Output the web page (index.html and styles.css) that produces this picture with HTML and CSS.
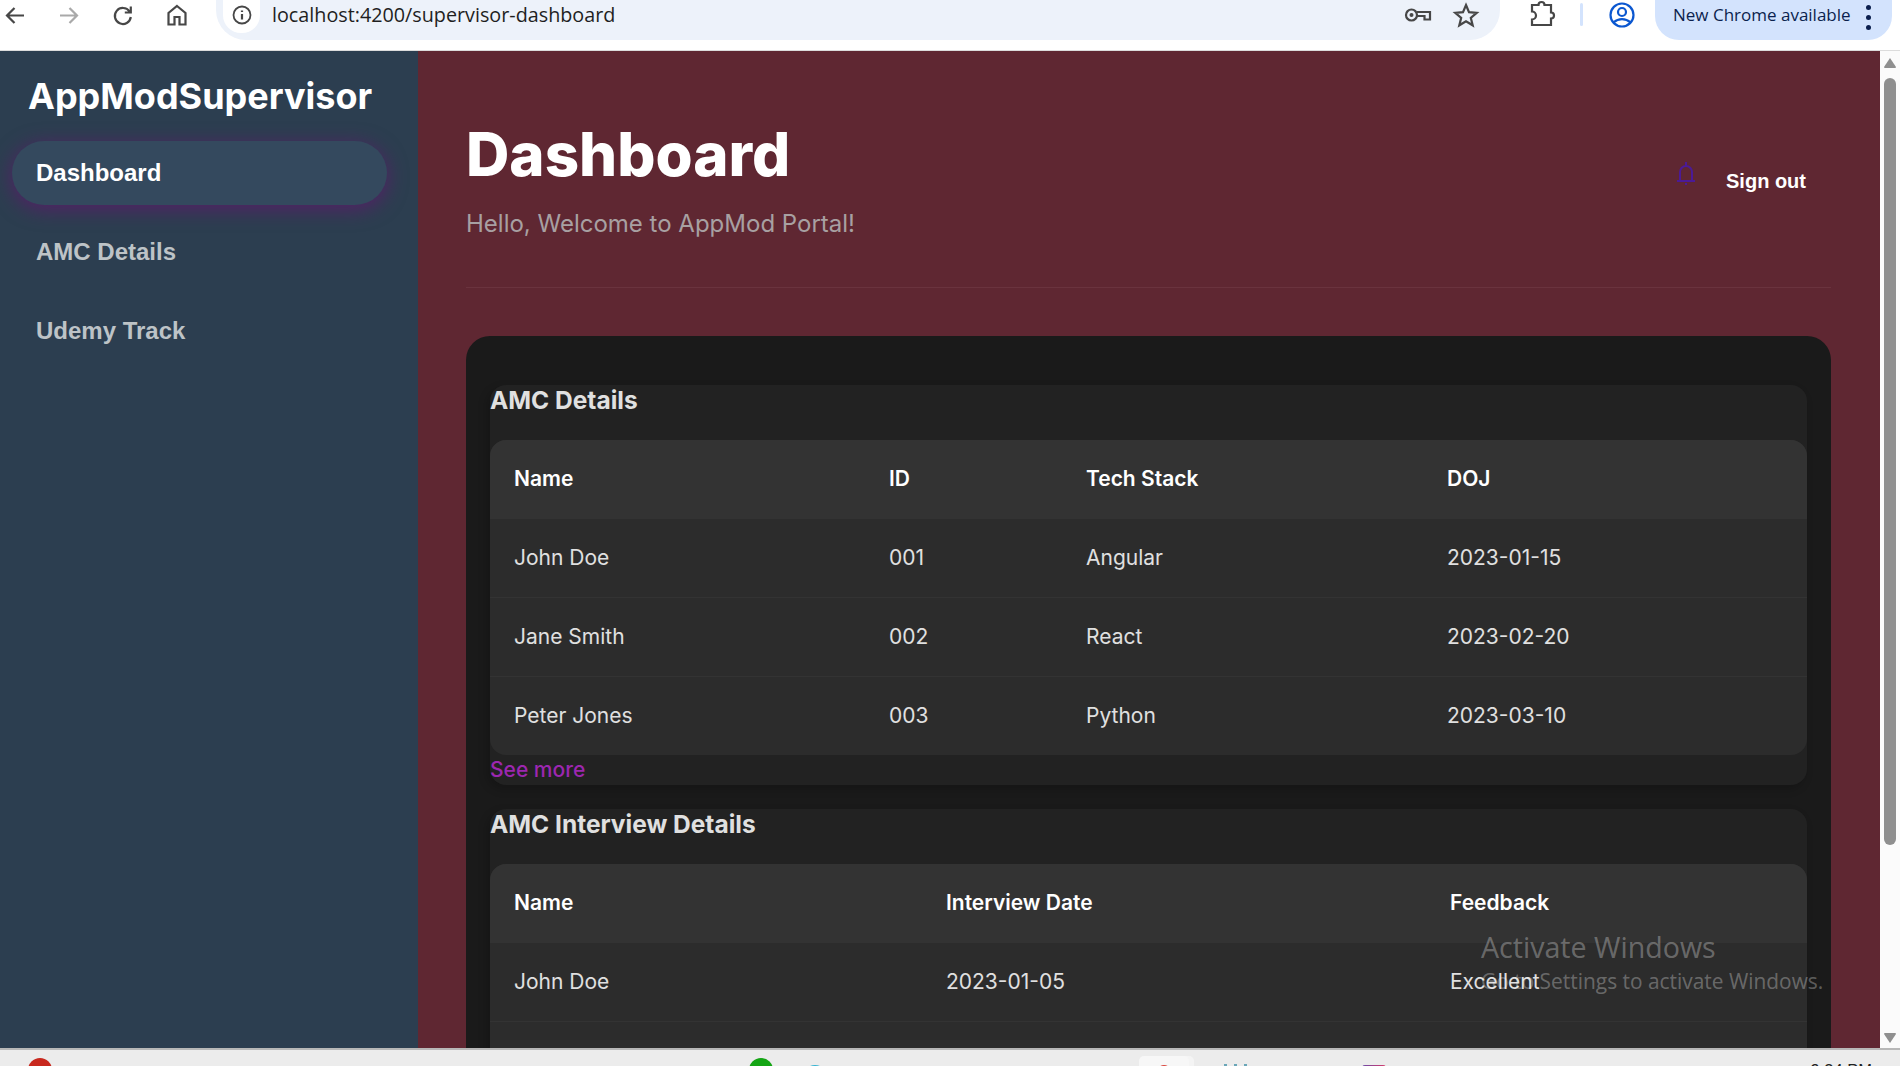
FILE: index.html
```html
<!DOCTYPE html>
<html lang="en">
<head>
    <meta charset="UTF-8">
    <meta name="viewport" content="width=device-width, initial-scale=1.0">
    <title>Supervisor Dashboard</title>
    <link rel="stylesheet" href="styles.css">
</head>
<body>

    <!-- browser toolbar -->
    <div class="toolbar">
        <div class="tool-group">
            <svg class="tool-icon" viewBox="0 0 30 30"><path d="M24 15.500H7M14.500 8l-7.500 7.500 7.500 7.500" class="ink"/></svg>
            <svg class="tool-icon" viewBox="0 0 30 30"><path d="M6 15.500h17M15.500 8l7.500 7.500-7.500 7.500" class="ink-off"/></svg>
            <svg class="tool-icon" viewBox="0 0 30 30"><path d="M21.500 11.500a8 8 0 1 0 1.300 5.500M22.800 6.500v6h-6" class="ink"/></svg>
            <svg class="tool-icon" viewBox="0 0 30 30"><path d="M15 6l8.500 7v11.500h-6v-7.500h-5v7.500h-6v-11.500z" class="ink"/></svg>
        </div>
        <div class="url-bar">
            <div class="info-chip">
                <svg class="tool-icon" viewBox="0 0 30 30"><circle cx="15" cy="15" r="8.500" class="ink-thin"/><path d="M15 14v5.500M15 10.500v1.500" class="ink"/></svg>
            </div>
            <span class="url-text">localhost:4200/supervisor-dashboard</span>
            <div class="url-actions">
                <svg class="tool-icon" viewBox="0 0 30 30"><circle cx="8.500" cy="15" r="5.500" class="ink"/><circle cx="8.500" cy="15" r="2" fill="#474747"/><path d="M14 12h13v7.500h-5.500v-3.500h-7.500" class="ink"/></svg>
                <svg class="tool-icon" viewBox="0 0 30 30"><path d="M15 5l3 7.200 7.700.6-5.900 5 1.900 7.500L15 21.200l-6.700 4.100 1.900-7.500-5.900-5 7.700-.6z" class="ink"/></svg>
            </div>
        </div>
        <svg class="tool-icon ext-icon" viewBox="0 0 30 30"><path d="M5 5h6.500a3 3 0 0 1 6 0H24v7.500a3 3 0 0 1 0 6V25H5v-5.500a4 4 0 0 0 0-8z" class="ink"/></svg>
        <div class="tool-sep"></div>
        <svg class="tool-icon profile-icon" viewBox="0 0 30 30"><circle cx="15" cy="15" r="11.500" class="ink-blue"/><circle cx="15" cy="12" r="4" class="ink-blue"/><path d="M6.500 22.500c5-4.500 12-4.500 17 0" class="ink-blue"/></svg>
        <div class="update-pill">
            <span>New Chrome available</span>
            <div class="dots"><i></i><i></i><i></i></div>
        </div>
    </div>

    <div class="window">
        <aside class="sidebar">
            <div class="brand">AppModSupervisor</div>
            <nav class="nav">
                <a class="nav-item active">Dashboard</a>
                <a class="nav-item">AMC Details</a>
                <a class="nav-item">Udemy Track</a>
            </nav>
        </aside>

        <main class="main">
            <header class="page-header">
                <div>
                    <h1 class="page-title">Dashboard</h1>
                    <p class="page-sub">Hello, Welcome to AppMod Portal!</p>
                </div>
                <div class="header-actions">
                    <svg class="bell" viewBox="0 0 20 24"><path d="M1 20h18M4 20v-9a6 6 0 0 1 12 0v9M10 1v4M9 23h2"/></svg>
                    <a class="sign-out">Sign out</a>
                </div>
            </header>

            <div class="panel">
                <section class="card">
                    <h2 class="card-title">AMC Details</h2>
                    <table class="data-table">
                        <colgroup>
                            <col class="col-a1"><col class="col-a2"><col class="col-a3"><col class="col-a4">
                        </colgroup>
                        <thead>
                            <tr><th>Name</th><th>ID</th><th>Tech Stack</th><th>DOJ</th></tr>
                        </thead>
                        <tbody>
                            <tr><td>John Doe</td><td>001</td><td>Angular</td><td>2023-01-15</td></tr>
                            <tr><td>Jane Smith</td><td>002</td><td>React</td><td>2023-02-20</td></tr>
                            <tr><td>Peter Jones</td><td>003</td><td>Python</td><td>2023-03-10</td></tr>
                        </tbody>
                    </table>
                    <a class="see-more">See more</a>
                </section>

                <section class="card">
                    <h2 class="card-title">AMC Interview Details</h2>
                    <table class="data-table">
                        <colgroup>
                            <col class="col-b1"><col class="col-b2"><col class="col-b3">
                        </colgroup>
                        <thead>
                            <tr><th>Name</th><th>Interview Date</th><th>Feedback</th></tr>
                        </thead>
                        <tbody>
                            <tr><td>John Doe</td><td>2023-01-05</td><td>Excellent</td></tr>
                            <tr><td></td><td></td><td></td></tr>
                        </tbody>
                    </table>
                </section>
            </div>
        </main>

        <div class="scrollbar">
            <svg class="scroll-arrow" viewBox="0 0 12 10"><path d="M6 0l6 9a1 1 0 0 1-1 1H1a1 1 0 0 1-1-1z"/></svg>
            <div class="scroll-thumb"></div>
            <svg class="scroll-arrow" viewBox="0 0 12 10"><path d="M6 10L0 1a1 1 0 0 1 1-1h10a1 1 0 0 1 1 1z"/></svg>
        </div>
    </div>

    <!-- windows taskbar, only the top edge is in the shot -->
    <div class="taskbar">
        <div class="task-dot task-red"></div>
        <div class="task-dot task-green"></div>
        <div class="task-dot task-blue"></div>
        <div class="task-tile"><div class="task-tile-mark"></div></div>
        <div class="task-bars"><i></i><i></i><i></i></div>
        <div class="task-grad"></div>
        <div class="task-clock">9:34 PM</div>
    </div>

    <div class="activate">
        <div class="activate-title">Activate Windows</div>
        <div class="activate-text">Go to Settings to activate Windows.</div>
    </div>

</body>
</html>
```
FILE: styles.css
```css
html, body {
    margin: 0;
    padding: 0;
    width: 1900px;
    height: 1066px;
    overflow: hidden;
}

body {
    font-family: Inter, "Liberation Sans", sans-serif;
    background-color: #fff;
    position: relative;
}

/* toolbar */
.toolbar {
    height: 50px;
    border-bottom: 1px solid #dcdcdc;
    display: flex;
    align-items: flex-start;
    background-color: #fff;
    overflow: hidden;
}

.tool-group {
    display: flex;
    gap: 24px;
}

.tool-icon {
    width: 30px;
    height: 30px;
    flex: none;
    display: block;
}

.ink, .ink-off, .ink-thin, .ink-blue {
    fill: none;
    stroke: #474747;
    stroke-width: 2.200;
}

.ink-off {
    stroke: #a9a9a9;
}

.ink-thin {
    stroke-width: 1.800;
}

.ink-blue {
    stroke: #0b57d0;
}

.url-bar {
    width: 1284px;
    height: 40px;
    margin-left: 24px;
    padding-left: 7px;
    box-sizing: border-box;
    background-color: #edf2fa;
    border-radius: 0 0 30px 30px;
    display: flex;
    align-items: flex-start;
}

.info-chip {
    width: 37px;
    height: 33px;
    background-color: #fff;
    border-radius: 0 0 18px 18px;
    display: flex;
    justify-content: center;
}

.url-text {
    margin-left: 12px;
    font-family: "Open Sans", sans-serif;
    font-size: 19.750px;
    line-height: 30px;
    color: #1f1f1f;
}

.url-actions {
    margin-left: auto;
    margin-right: 19px;
    display: flex;
    gap: 18px;
}

.ext-icon {
    margin-left: 27px;
}

.tool-sep {
    width: 3px;
    height: 23px;
    margin: 3px 0 0 23px;
    background-color: #d3e3fd;
    border-radius: 2px;
}

.profile-icon {
    margin-left: 24px;
}

.update-pill {
    width: 237px;
    height: 40px;
    margin-left: 18px;
    padding-left: 18px;
    box-sizing: border-box;
    background-color: #d3e3fd;
    border-radius: 0 0 24px 24px;
    display: flex;
    align-items: flex-start;
    font-family: "Open Sans", sans-serif;
    font-size: 17px;
    line-height: 30px;
    color: #0b1f4e;
}

.dots {
    margin: 5px 21px 0 auto;
    display: flex;
    flex-direction: column;
    gap: 5px;
}

.dots i {
    display: block;
    width: 5px;
    height: 5px;
    border-radius: 50%;
    background-color: #0b1f4e;
}

/* app */
.window {
    height: 997px;
    display: flex;
    overflow: hidden;
}

.sidebar {
    width: 418px;
    flex: none;
    background-color: #2c3e50;
    box-sizing: border-box;
    padding: 21px 31px 0 12px;
}

.brand {
    margin-left: 16px;
    font-size: 36px;
    line-height: 48px;
    font-weight: 700;
    color: #fff;
    white-space: nowrap;
}

.nav {
    margin-top: 21px;
    display: flex;
    flex-direction: column;
    gap: 15px;
}

.nav-item {
    height: 64px;
    line-height: 64px;
    padding-left: 24px;
    border-radius: 32px;
    font-family: "Liberation Sans", sans-serif;
    font-size: 24px;
    font-weight: 700;
    color: #bdc3c7;
}

.nav-item.active {
    background-color: #34495e;
    color: #fff;
    box-shadow: 0 4px 20px rgba(128, 0, 128, 0.5);
}

.main {
    flex: 1;
    min-width: 0;
    background-color: #5f2732;
    padding: 67px 49px 0 48px;
    overflow: hidden;
}

.page-header {
    display: flex;
    justify-content: space-between;
    align-items: center;
    padding-bottom: 47px;
    border-bottom: 1px solid #6a333e;
}

.page-title {
    margin: 0;
    font-size: 60px;
    line-height: 72px;
    font-weight: 800;
    color: #fff;
}

.page-sub {
    margin: 18px 0 0;
    font-size: 24px;
    line-height: 32px;
    color: #a8a0a2;
}

.header-actions {
    display: flex;
    align-items: center;
    margin-top: 4px;
    padding-right: 25px;
}

.bell {
    width: 20px;
    height: 24px;
    margin-bottom: 16px;
    fill: none;
    stroke: #4b1a96;
    stroke-width: 2;
}

.sign-out {
    margin-left: 30px;
    font-family: "Liberation Sans", sans-serif;
    font-size: 20px;
    font-weight: 700;
    color: #fff;
}

.panel {
    margin-top: 48px;
    padding: 49px 24px 24px;
    background-color: #1a1a1a;
    border-radius: 24px;
    display: flex;
    flex-direction: column;
    gap: 24px;
}

.card {
    background-color: #222;
    border-radius: 16px;
    box-shadow: -3px 4px 10px rgba(0, 0, 0, 0.2);
    height: 400px;
}

.card-title {
    margin: 0 0 24px;
    font-size: 24.500px;
    line-height: 31px;
    font-weight: 700;
    color: #e0e0e0;
}

.data-table {
    width: 100%;
    table-layout: fixed;
    border-collapse: separate;
    border-spacing: 0;
    border-radius: 16px;
    overflow: hidden;
    background-color: #2c2c2c;
}

.col-a1 { width: 375px; }
.col-a2 { width: 197px; }
.col-a3 { width: 361px; }
.col-b1 { width: 432px; }
.col-b2 { width: 504px; }

.data-table th,
.data-table td {
    padding: 0 24px 2px;
    text-align: left;
    font-size: 21px;
}

.data-table th {
    height: 77px;
    background-color: #333;
    font-weight: 600;
    color: #fff;
}

.data-table td {
    height: 76px;
    border-bottom: 1px solid #333;
    color: #e0e0e0;
}

.data-table tbody tr:last-child td {
    border-bottom: none;
}

.see-more {
    display: block;
    margin-top: 2px;
    font-size: 21px;
    line-height: 26px;
    font-weight: 550;
    color: #9c27b0;
}

/* scrollbar */
.scrollbar {
    width: 20px;
    flex: none;
    background-color: #fbfbfb;
    display: flex;
    flex-direction: column;
    align-items: center;
    padding: 7px 0 5px;
    box-sizing: border-box;
}

.scroll-arrow {
    width: 12px;
    height: 10px;
    fill: #8f8f8f;
    flex: none;
}

.scroll-thumb {
    width: 12px;
    height: 767px;
    margin-top: 10px;
    margin-bottom: auto;
    border-radius: 6px;
    background-color: #8f8f8f;
}

/* taskbar */
.taskbar {
    height: 16px;
    border-top: 2px solid #b8b8b8;
    background-color: #ececec;
    display: flex;
    align-items: flex-start;
    overflow: hidden;
    position: relative;
}

.task-dot {
    width: 24px;
    height: 24px;
    border-radius: 50%;
    flex: none;
}

.task-red {
    margin: 8px 0 0 28px;
    background-color: #c8281e;
}

.task-green {
    margin: 8px 0 0 697px;
    background-color: #14a514;
}

.task-blue {
    margin: 15px 0 0 30px;
    background-color: #35b4d2;
}

.task-tile {
    width: 50px;
    height: 40px;
    margin: 6px 0 0 312px;
    background-color: #f7f7f7;
    border-radius: 5px;
    box-shadow: 5px 0 0 #f4f4f4;
    flex: none;
    display: flex;
    justify-content: center;
}

.task-tile-mark {
    width: 14px;
    height: 14px;
    margin-top: 9px;
    border-radius: 50%;
    background-color: #d9453c;
}

.task-bars {
    margin: 14px 0 0 35px;
    display: flex;
    gap: 7px;
    flex: none;
}

.task-bars i {
    display: block;
    width: 3px;
    height: 10px;
    background-color: #6aa6b8;
}

.task-grad {
    width: 24px;
    height: 20px;
    margin: 15px 0 0 115px;
    border-radius: 3px 3px 0 0;
    background: linear-gradient(to right, #6a4aa8, #d83a6a);
    flex: none;
}

.task-clock {
    margin: 11px 0 0 auto;
    padding-right: 28px;
    font-family: "Liberation Sans", sans-serif;
    font-size: 16.500px;
    line-height: 18px;
    color: #222;
}

/* watermark over the page */
.activate {
    position: absolute;
    left: 1481px;
    top: 929px;
    font-family: "Open Sans", sans-serif;
    color: rgba(255, 255, 255, 0.3);
    pointer-events: none;
    white-space: nowrap;
}

.activate-title {
    font-size: 28.600px;
    line-height: 36px;
}

.activate-text {
    margin-top: 2px;
    font-size: 20.900px;
    line-height: 28px;
}
```
